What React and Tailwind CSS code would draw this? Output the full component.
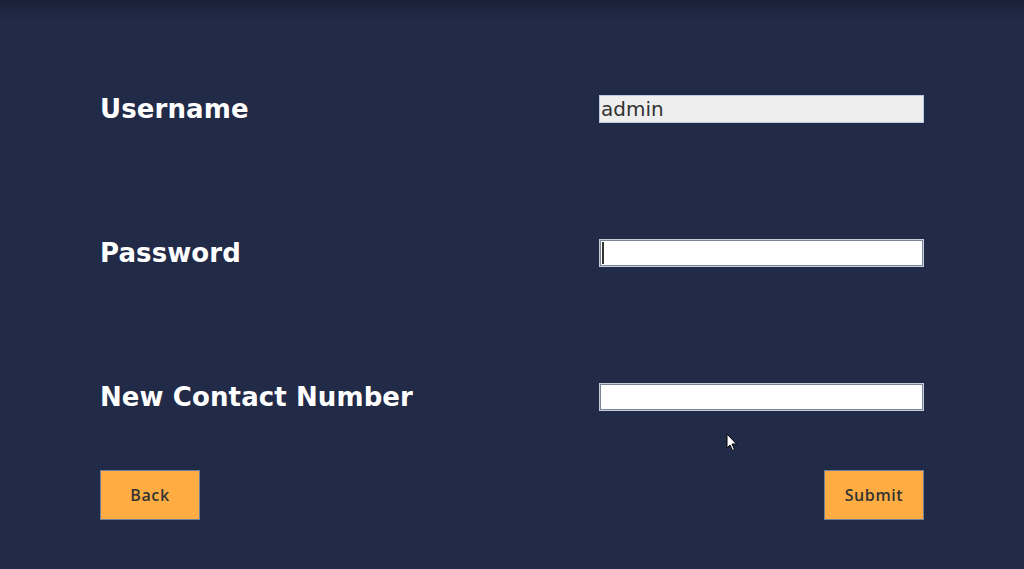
export default function App() {
  const label = "text-[26px] font-bold text-white leading-none tracking-[0.1px]";
  const btn =
    "w-[100px] h-[50px] bg-[#ffad42] border border-[#6f7f9c] text-[16px] font-semibold tracking-[0.6px] text-[#333]";
  return (
    <div
      className="w-[1024px] h-[569px] bg-[#212a47] relative overflow-hidden"
      style={{ fontFamily: '"DejaVu Sans", sans-serif' }}
    >
      <div className="absolute inset-x-0 top-0 h-[22px] bg-gradient-to-b from-[#1b2139] to-[#212a47]" />
      <div className="relative px-[100px] pt-[37px]">
        <div className="h-[144px] flex items-center justify-between">
          <span className={label}>Username</span>
          <input
            readOnly
            value="admin"
            className="w-[325px] h-[28px] bg-[#eeeeee] border border-[#b9cbe4] px-[1px] text-[20px] text-[#333] outline-none"
            style={{ fontFamily: '"DejaVu Sans", sans-serif' }}
          />
        </div>
        <div className="h-[144px] flex items-center justify-between">
          <span className={label}>Password</span>
          <div className="w-[325px] h-[28px] bg-white border border-[#c6cedb] shadow-[inset_1px_1px_0_#7b8596,inset_-1px_-1px_0_#7b8596] relative">
            <div className="absolute left-[2px] top-[2px] bottom-[2px] w-[2px] bg-[#333]" />
          </div>
        </div>
        <div className="h-[144px] flex items-center justify-between">
          <span className={label}>New Contact Number</span>
          <div className="w-[325px] h-[28px] bg-white border border-[#c6cedb] shadow-[inset_1px_1px_0_#7b8596,inset_-1px_-1px_0_#7b8596]" />
        </div>
        <div className="flex justify-between pt-[1px]">
          <button className={btn} style={{ fontFamily: '"Open Sans", sans-serif' }}>
            Back
          </button>
          <button className={btn} style={{ fontFamily: '"Open Sans", sans-serif' }}>
            Submit
          </button>
        </div>
      </div>
      <svg className="absolute left-[726px] top-[433px]" width="12" height="19" viewBox="0 0 12 19">
        <path d="M1 1 L1 15 L4 12 L6.5 17.5 L8.5 16.5 L6 11 L10.5 11 Z" fill="white" stroke="black" strokeWidth="1" />
      </svg>
    </div>
  );
}
